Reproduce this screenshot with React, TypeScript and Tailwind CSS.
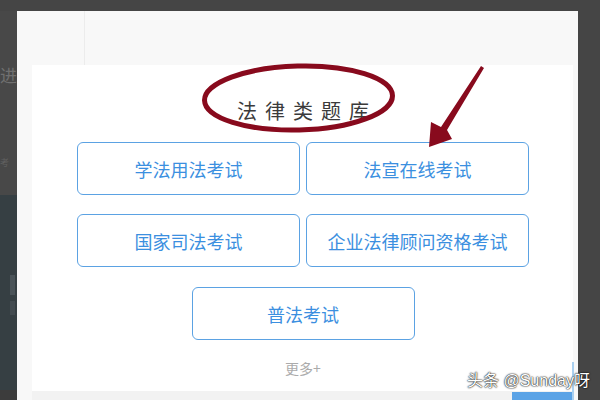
const CJK = "font-['Microsoft_YaHei','Noto_Sans_CJK_SC',sans-serif]";

const exams = [
  ["学法用法考试", "法宣在线考试"],
  ["国家司法考试", "企业法律顾问资格考试"],
];

function ExamButton({ label }: { label: string }) {
  return (
    <button className="h-[53px] w-[223px] rounded-[6px] border-[1.5px] border-[#5ba2e3] bg-white text-[18px] leading-none text-[#3b8fe0]">
      {label}
    </button>
  );
}

function Annotations() {
  // hand-drawn red circle + arrow over the dialog
  return (
    <svg
      className="pointer-events-none absolute left-0 top-0"
      width="600"
      height="400"
      viewBox="0 0 600 400"
    >
      <ellipse
        cx="298.5"
        cy="98"
        rx="94"
        ry="32"
        fill="none"
        stroke="#880a1d"
        strokeWidth="5"
        transform="rotate(-1.5 298.5 98)"
      />
      <polygon
        points="481,66 484,68 447,130 452,139 429,147 431,122 441,127"
        fill="#880a1d"
      />
    </svg>
  );
}

export default function App() {
  return (
    <div className={`relative flex h-[400px] w-[600px] overflow-hidden bg-[#454545] pt-[11px] ${CJK}`}>
      {/* page behind the overlay */}
      <div className="flex w-[17px] flex-col">
        <div className="relative h-[184px] overflow-hidden bg-[#484848]">
          <span className="absolute left-0 top-[54px] text-[17px] leading-[20px] text-[#707070]">进</span>
          <span className="absolute left-0 top-[145px] text-[9px] text-[#606060]">考</span>
        </div>
        <div className="flex flex-1 flex-col gap-[6px] bg-[#363f43] pt-[80px]">
          <div className="ml-[10px] h-[20px] w-[5px] bg-[#4a5358]" />
          <div className="ml-[10px] h-[14px] w-[5px] bg-[#434b50]" />
        </div>
        <div className="h-[10px] bg-[#3c3c3c]" />
      </div>

      <div className="flex w-[561px] flex-col bg-[#f8f8f8]">
        <div className="flex h-[55px]">
          <div className="w-[68px] border-r border-[#ececec]" />
        </div>
        <div className="flex flex-1 flex-col pl-[15px] pr-[5px]">
          <div className="flex h-[326px] flex-col items-center bg-white pl-[1px]">
            <h2 className="mt-[33px] pl-[8px] text-[20px] font-normal leading-[26px] tracking-[8px] text-[#3a3a3a]">
              法律类题库
            </h2>
            <div className="mt-[18px] grid grid-cols-2 gap-x-[6px] gap-y-[19px]">
              {exams.flat().map((label) => (
                <ExamButton key={label} label={label} />
              ))}
            </div>
            <div className="mt-[20px]">
              <ExamButton label="普法考试" />
            </div>
            <div className="mt-[19px] text-[14px] leading-[18px] text-[#ababab]">更多+</div>
          </div>
          <div className="relative flex flex-1 justify-end bg-[#f2f2f2]">
            <div className="mt-[1px] h-[8px] w-[61px] bg-[#5ba3e6]" />
          </div>
        </div>
      </div>

      <Annotations />

      <div className="absolute left-[572px] top-[362px] h-[38px] w-[2px] bg-[#a9d0f0]" />
      <div className="absolute left-[467px] top-[371px] font-['Liberation_Sans','Noto_Sans_CJK_SC',sans-serif] text-[16px] leading-[20px] text-white [text-shadow:0_0_2px_#000,0_0_1px_#000]">
        头条 @Sunday呀
      </div>
    </div>
  );
}
